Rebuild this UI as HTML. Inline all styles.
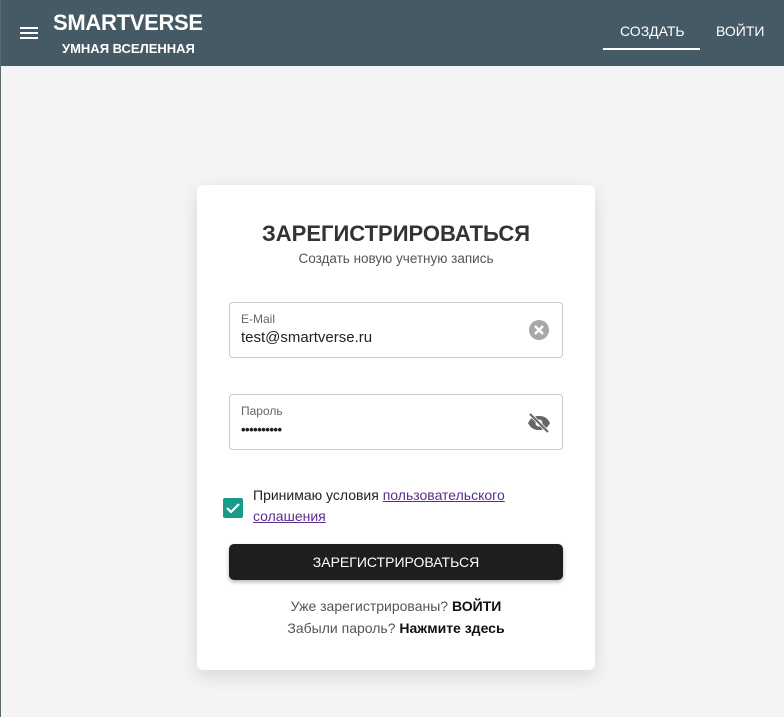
<!DOCTYPE html>
<html><head><meta charset="utf-8"><style>
*{box-sizing:border-box;margin:0;padding:0}
body{width:784px;height:717px;background:#f4f4f4;font-family:"Liberation Sans",sans-serif;position:relative;overflow:hidden}
.edge{position:absolute;left:0;top:0;width:1px;height:717px;background:#5a6a70}
.hdr{position:absolute;left:0;top:0;width:784px;height:66px;background:#465a65;color:#fff}
.burger{position:absolute;left:20px;top:27px;width:18px}
.burger i{display:block;height:2px;background:#fff;margin-bottom:3px}
.t1{position:absolute;left:53px;top:10px;font-size:22px;font-weight:bold;letter-spacing:-0.3px}
.t2{position:absolute;left:62px;top:41px;font-size:13px;font-weight:bold}
.nav{position:absolute;top:23px;font-size:14px}
.ul{position:absolute;left:603px;top:48px;width:97px;height:2px;background:#fff}
.card{position:absolute;left:197px;top:185px;width:398px;height:485px;background:#fff;border-radius:6px;box-shadow:0 6px 18px rgba(0,0,0,.12)}
.h{position:absolute;left:0;width:100%;text-align:center;top:36px;font-size:22px;font-weight:bold;color:#333}
.sub{position:absolute;width:100%;text-align:center;top:66px;font-size:13.5px;color:#555}
.f{position:absolute;left:32px;width:334px;height:56px;border:1px solid #c8c8c8;border-radius:4px}
.f .l{position:absolute;left:11px;top:9px;font-size:12px;color:#666}
.f .v{position:absolute;left:11px;top:26px;font-size:15px;color:#222}
.cb{position:absolute;left:26px;top:313px;width:20px;height:20px;background:#179c8a;border-radius:2px}
.terms{position:absolute;left:56px;top:300px;font-size:14px;line-height:21px;color:#222;width:300px}
.terms a{color:#5b2d8f;text-decoration:underline}
.btn{position:absolute;left:32px;top:359px;width:334px;height:36px;background:#1e1e1e;border-radius:5px;color:#fff;font-size:14px;text-align:center;line-height:36px;box-shadow:0 2px 4px rgba(0,0,0,.3)}
.lk{position:absolute;width:100%;text-align:center;font-size:14px;color:#555}
.lk b{color:#111}
</style></head><body>
<div class="hdr">
<div class="burger"><i></i><i></i><i></i></div>
<div class="t1">SMARTVERSE</div>
<div class="t2">УМНАЯ ВСЕЛЕННАЯ</div>
<div class="nav" style="left:620px">СОЗДАТЬ</div>
<div class="nav" style="left:716px">ВОЙТИ</div>
<div class="ul"></div>
</div>
<div class="edge"></div>
<div class="card">
<div class="h">ЗАРЕГИСТРИРОВАТЬСЯ</div>
<div class="sub">Создать новую учетную запись</div>
<div class="f" style="top:117px"><div class="l">E-Mail</div><div class="v">test@smartverse.ru</div>
<svg style="position:absolute;left:299px;top:17px" width="20" height="20" viewBox="0 0 20 20"><circle cx="10" cy="10" r="10" fill="#a8a8a8"/><path d="M6 6L14 14M14 6L6 14" stroke="#fff" stroke-width="2.4"/></svg></div>
<div class="f" style="top:209px"><div class="l">Пароль</div><div class="v" style="letter-spacing:-0.5px;font-weight:bold;font-size:13px;top:27px">••••••••••</div>
<svg style="position:absolute;left:297px;top:16px" width="24" height="24" viewBox="0 0 24 24"><path d="M1 12C4 6 8 5 12 5s8 1 11 7c-3 6-7 7-11 7S4 18 1 12z" fill="#666"/><circle cx="12" cy="12" r="3.5" fill="#fff"/><path d="M3 3L21 21" stroke="#fff" stroke-width="3.5"/><path d="M3 3L21 21" stroke="#666" stroke-width="2"/></svg></div>
<div class="cb"><svg width="20" height="20" viewBox="0 0 20 20"><path d="M4 10l4 4 8-8" stroke="#fff" stroke-width="2.2" fill="none"/></svg></div>
<div class="terms">Принимаю условия <a> пользовательского солашения</a></div>
<div class="btn">ЗАРЕГИСТРИРОВАТЬСЯ</div>
<div class="lk" style="top:413px">Уже зарегистрированы? <b>ВОЙТИ</b></div>
<div class="lk" style="top:435px">Забыли пароль? <b>Нажмите здесь</b></div>
</div>
</body></html>
